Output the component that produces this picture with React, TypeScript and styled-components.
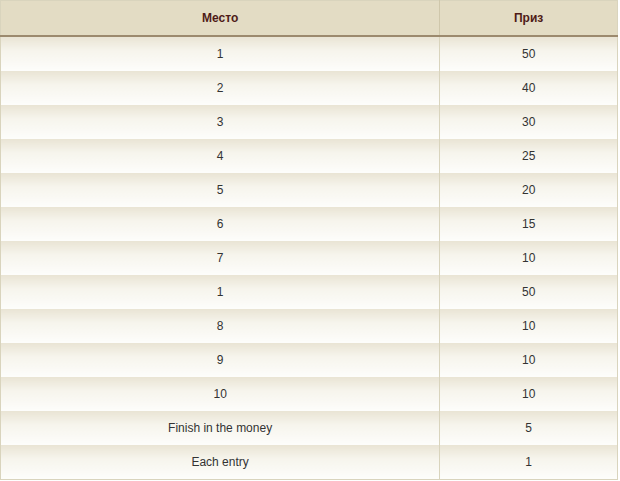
import React, { FC } from "react";
import styled, { createGlobalStyle } from "styled-components";

const GlobalStyle = createGlobalStyle`
  html, body {
    margin: 0;
    padding: 0;
    background: #ffffff;
  }
`;

const Table = styled.table`
  width: 618px;
  border-collapse: collapse;
  border: 1px solid #d9d4bd;
  font-family: "Liberation Sans", Arial, sans-serif;
  font-size: 12px;
`;

const HeadCell = styled.th<{ $w: number }>`
  width: ${({ $w }) => $w}px;
  height: 34px;
  padding: 0;
  background: #e3dcc4;
  color: #4f1b17;
  font-weight: bold;
  text-align: center;
  border-bottom: 2px solid #9c8a6e;
  border-left: 1px solid #cfc7ab;
  &:first-child {
    border-left: none;
  }
`;

const Cell = styled.td`
  height: 34px;
  padding: 0;
  color: #333333;
  text-align: center;
  background: linear-gradient(to bottom, #e9e4d4 0%, #f6f4ec 40%, #fdfdfb 100%);
  border-left: 1px solid #d9d4bd;
  &:first-child {
    border-left: none;
  }
`;

interface Prize {
  place: string;
  prize: string;
}

const prizes: Array<Prize> = [
  { place: "1", prize: "50" },
  { place: "2", prize: "40" },
  { place: "3", prize: "30" },
  { place: "4", prize: "25" },
  { place: "5", prize: "20" },
  { place: "6", prize: "15" },
  { place: "7", prize: "10" },
  { place: "1", prize: "50" },
  { place: "8", prize: "10" },
  { place: "9", prize: "10" },
  { place: "10", prize: "10" },
  { place: "Finish in the money", prize: "5" },
  { place: "Each entry", prize: "1" }
];

const App: FC = () => {
  return (
    <>
      <GlobalStyle />
      <Table>
        <thead>
          <tr>
            <HeadCell $w={439}>Место</HeadCell>
            <HeadCell $w={177}>Приз</HeadCell>
          </tr>
        </thead>
        <tbody>
          {prizes.map((p, i) => (
            <tr key={i}>
              <Cell>{p.place}</Cell>
              <Cell>{p.prize}</Cell>
            </tr>
          ))}
        </tbody>
      </Table>
    </>
  );
};

export default App;
